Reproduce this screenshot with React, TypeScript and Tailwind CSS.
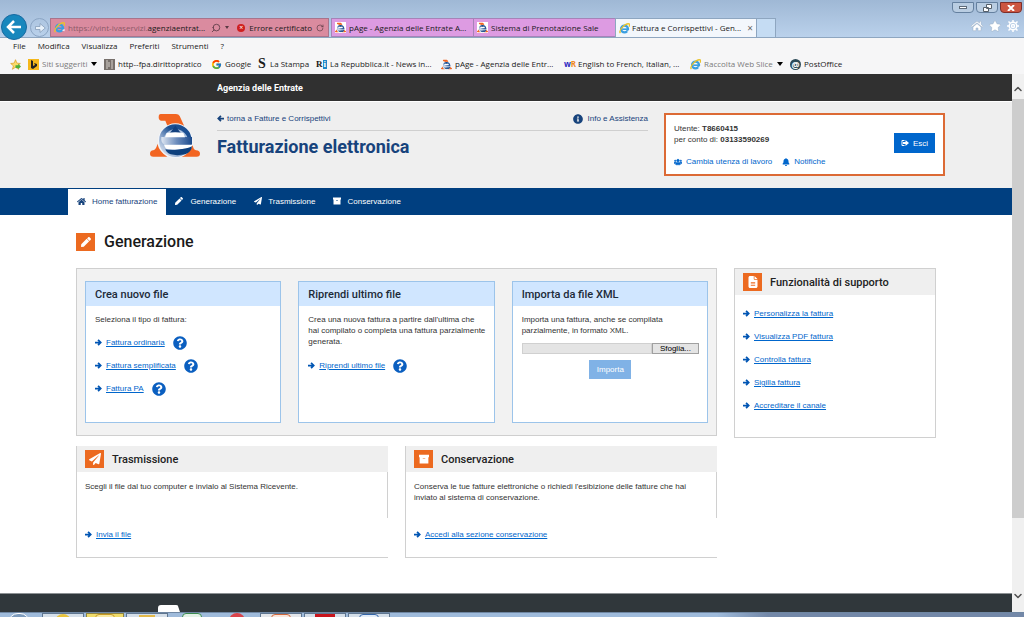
import type { ReactNode } from "react";
import { FaBell, FaHome, FaInfoCircle, FaPaperPlane, FaPen, FaQuestionCircle, FaStar, FaUsers } from "react-icons/fa";
import { FaFileLines } from "react-icons/fa6";
import { FcGoogle } from "react-icons/fc";
import { LuRotateCw, LuSearch, LuChevronUp, LuChevronDown } from "react-icons/lu";

const IeIcon = () => (
  <svg viewBox="0 0 24 24" className="size-[11px] shrink-0" fill="none">
    <circle cx="12" cy="13" r="7.5" stroke="#3a9fe0" strokeWidth="5" />
    <path d="M7 13.5h15" stroke="#3a9fe0" strokeWidth="3.5" />
    <path d="M17 18l6-3v5z" fill="#f7f8fa" />
    <path d="M3 22C-2 16 14 0 22 2c2 1 1 4 0 6" stroke="#e9c32c" strokeWidth="3" />
  </svg>
);

const AgenziaLogo = ({ className = "" }: { className?: string }) => (
  <svg viewBox="0 0 150 135" className={className}>
    <defs>
      <linearGradient id="band" x1="0" y1="0" x2="1" y2="0">
        <stop offset="0" stopColor="#dfe7f2" />
        <stop offset="0.5" stopColor="#6d8dbd" />
        <stop offset="1" stopColor="#1b4a8c" />
      </linearGradient>
      <linearGradient id="ring" x1="0" y1="1" x2="1" y2="0">
        <stop offset="0" stopColor="#f4f7fb" />
        <stop offset="0.35" stopColor="#8ba6cc" />
        <stop offset="0.6" stopColor="#1b4f92" />
      </linearGradient>
    </defs>
    <path d="M32 3H78Q86 3 89 9L103 40Q78 28 52 38L46 23H33Q26 22 26 13Q26 3 32 3Z" fill="#f26522" />
    <path d="M22 92Q28 116 52 131H10Q0 131 0 122Q0 113 10 112Q20 108 22 92Z" fill="#f26522" />
    <path d="M128 96Q130 110 138 112Q150 113 150 122Q150 131 140 131H92Q118 122 128 96Z" fill="#f26522" />
    <circle cx="76" cy="83" r="52" fill="#f2f5fa" />
    <circle cx="76" cy="83" r="49" fill="url(#ring)" />
    <path d="M40 80Q44 56 70 48H82Q108 56 114 78H40Z" fill="#a9bfdc" />
    <path d="M76 38L94 62H58Z" fill="#12407f" />
    <path d="M34 72H126V95H44Q32 90 34 72Z" fill="url(#band)" />
    <path d="M50 60Q76 56 100 60L105 73H45Z" fill="#fff" />
    <path d="M42 95H128L122 105Q84 112 50 108Q44 104 42 95Z" fill="#fff" />
    <path d="M46 109Q60 112 84 110Q110 108 126 100Q124 118 106 124Q80 129 62 124Q50 120 46 109Z" fill="#0d3f7c" />
  </svg>
);

const ArchiveIcon = ({ className = "" }: { className?: string }) => (
  <svg viewBox="0 0 16 16" className={className} fill="currentColor">
    <path d="M0 1h16v4H0zM1 5h14v10H1zM6 7v1h4V7z" fillRule="evenodd" />
  </svg>
);

const ArrowIcon = ({ className = "" }: { className?: string }) => (
  <svg viewBox="0 0 16 16" className={className} fill="none" stroke="currentColor" strokeWidth="4">
    <path d="M0 8h13M7 2l6 6-6 6" />
  </svg>
);

const SignOutIcon = () => (
  <svg viewBox="0 0 16 16" className="size-2" fill="currentColor">
    <path d="M7 2H3a2 2 0 0 0-2 2v8a2 2 0 0 0 2 2h4v-2H3V4h4z" />
    <path d="M9 2l7 6-7 6v-4H4V6h5z" />
  </svg>
);

const tabs = [
  { label: "pAge - Agenzia delle Entrate A...", active: false },
  { label: "Sistema di Prenotazione Sale", active: false },
  { label: "Fattura e Corrispettivi - Gen...", active: true },
];

const menus = ["File", "Modifica", "Visualizza", "Preferiti", "Strumenti", "?"];

const bookmarks: { label: string; width: string; icon: ReactNode; muted?: boolean }[] = [
  {
    label: "Siti suggeriti",
    width: "w-[76px]",
    muted: true,
    icon: (
      <svg viewBox="0 0 11 11" className="size-[11px]">
        <path d="M0 0h11v11H0z" fill="#f5b81c" />
        <path d="M3 1l2 1v5l2-1-1-2 3 1v2L5 10 3 9z" fill="#222" />
      </svg>
    ),
  },
  {
    label: "http--fpa.dirittopratico",
    width: "w-[107px]",
    icon: (
      <svg viewBox="0 0 11 11" className="size-[11px]">
        <path d="M0 0h11v11H0z" fill="#77706c" />
        <path d="M3 1v9M8 1v9M5 3v5" stroke="#d8d2cc" />
      </svg>
    ),
  },
  { label: "Google", width: "w-[47px]", icon: <FcGoogle className="size-[11px]" /> },
  {
    label: "La Stampa",
    width: "w-[58px]",
    icon: <span className="w-[9px] font-['Liberation_Serif',serif] text-sm leading-none font-black">S</span>,
  },
  {
    label: "La Repubblica.it - News in...",
    width: "w-[125px]",
    icon: (
      <span className="flex w-[11px] font-['Liberation_Serif',serif] text-[9px] leading-none font-bold">
        R<span className="bg-[#1b87c9] px-px text-white">i</span>
      </span>
    ),
  },
  { label: "pAge - Agenzia delle Entr...", width: "w-[123px]", icon: <AgenziaLogo className="size-[11px]" /> },
  {
    label: "English to French, Italian, ...",
    width: "w-[126px]",
    icon: (
      <span className="w-[11px] font-bold text-[#2a1fc0]">
        w<span className="text-[#f08a1d]">R</span>
      </span>
    ),
  },
  { label: "Raccolta Web Slice", width: "w-[100px]", muted: true, icon: <IeIcon /> },
  {
    label: "PostOffice",
    width: "w-[60px]",
    icon: (
      <span className="flex size-[11px] items-center justify-center rounded-full bg-[#2c4a58] text-[9px] leading-none font-bold text-white">
        @
      </span>
    ),
  },
];

const Browser = () => (
  <div className="font-['Open_Sans',sans-serif] text-[8px] text-[#1a1a1a]">
    <div className="bg-gradient-to-b from-[#9fb8d5] to-[#bbd2ec]">
      <div className="flex h-[14px] items-start justify-end gap-[2px] pt-[2px] pr-[2px]">
        <button aria-label="Riduci" className="flex h-[11px] w-[22px] items-center justify-center rounded-b-sm border border-[#64809f] bg-[#b9cde2]">
          <span className="h-[3px] w-2 border border-[#5d6b7a] bg-white" />
        </button>
        <button aria-label="Ripristina" className="flex h-[11px] w-[22px] items-center justify-center rounded-b-sm border border-[#64809f] bg-[#b9cde2]">
          <svg viewBox="0 0 9 8" className="h-2 w-[9px]" fill="#fff" stroke="#56606b">
            <path d="M3.5.5h5v4h-5zM.5 3.5h5v4h-5z" />
          </svg>
        </button>
        <button aria-label="Chiudi" className="flex h-[11px] w-[22px] items-center justify-center rounded-b-sm border border-[#7d2f2b] bg-[#cc5540]">
          <svg viewBox="0 0 8 6" className="h-[6px] w-2" stroke="#fff" strokeWidth="2">
            <path d="M1 0l6 6M7 0L1 6" />
          </svg>
        </button>
      </div>
      <div className="flex h-6 items-end border-b border-[#8ea6c0]">
        <button aria-label="Indietro" className="z-10 -mb-[3px] ml-px flex size-[26px] shrink-0 items-center justify-center rounded-full border border-[#1769a0] bg-[#1887bd] text-white">
          <svg viewBox="0 0 16 16" className="size-4" fill="none" stroke="currentColor" strokeWidth="2.5">
            <path d="M15 8H3M8 2L2 8l6 6" />
          </svg>
        </button>
        <button aria-label="Avanti" className="ml-[3px] flex size-[19px] shrink-0 items-center justify-center rounded-full border border-[#8ba5c4]">
          <svg viewBox="0 0 16 16" className="size-3" fill="#e8f1fa" stroke="#8199b5">
            <path d="M2 6h6V2l7 6-7 6v-4H2z" />
          </svg>
        </button>
        <div className="ml-px flex h-[19px] w-[279px] shrink-0 items-center border border-[#a8748c] bg-[#da8b9f] pr-1 pl-[3px]">
          <IeIcon />
          <span className="ml-[3px] whitespace-nowrap text-[#8c5a68]">
            https://vint-ivaservizi.<span className="text-[#1a1a1a]">agenziaentrat...</span>
          </span>
          <LuSearch className="ml-auto size-[10px] shrink-0 -scale-x-100 text-[#5a3a44]" />
          <span className="ml-1 border-x-2 border-t-3 border-x-transparent border-t-[#5a3a44]" />
          <span className="ml-2 flex size-2 shrink-0 items-center justify-center rounded-full bg-[#cf1f1f] text-[7px] leading-none text-white">×</span>
          <span className="mx-1 whitespace-nowrap">Errore certificato</span>
          <LuRotateCw className="size-2 shrink-0 text-[#5a3a44]" />
        </div>
        <div className="ml-[2px] flex">
          {tabs.map((tab) => (
            <div
              key={tab.label}
              className={
                tab.active
                  ? "flex h-[19px] w-[142px] items-center gap-[2px] border border-b-0 border-[#8ea6c0] bg-[#f3f7fc] px-[3px]"
                  : "flex h-[19px] w-[142px] items-center gap-[3px] border border-r-0 border-[#a683b8] bg-[#dd9be2] px-[3px]"
              }
            >
              {tab.active ? <IeIcon /> : <AgenziaLogo className="size-[11px] shrink-0 bg-white" />}
              <span className="whitespace-nowrap">{tab.label}</span>
              {tab.active && (
                <button aria-label="Chiudi scheda" className="ml-auto text-[10px] leading-none text-[#666]">
                  ×
                </button>
              )}
            </div>
          ))}
          <button aria-label="Nuova scheda" className="h-[19px] w-[19px] border border-b-0 border-l-0 border-[#8ea6c0] bg-[#c5dcf3]" />
        </div>
        <div className="mr-[5px] mb-[5px] ml-auto flex gap-[6px] text-white">
          <FaHome className="size-3 stroke-[#8aa0b8] stroke-20" />
          <FaStar className="size-3 stroke-[#8aa0b8] stroke-20" />
          <svg viewBox="0 0 16 16" className="size-3" fill="none" stroke="#fff" strokeWidth="2">
            <circle cx="8" cy="8" r="5" />
            <circle cx="8" cy="8" r="2" />
            <path d="M8 0v3M8 13v3M0 8h3M13 8h3M2 2l2 2M12 12l2 2M2 14l2-2M12 4l2-2" />
          </svg>
        </div>
      </div>
    </div>
    <div className="bg-[#f6f6f7]">
      <nav className="flex h-4 items-center gap-3 pl-[13px]">
        {menus.map((menu) => (
          <button key={menu}>{menu}</button>
        ))}
      </nav>
      <div className="flex h-5 items-center pl-[10px]">
        <svg viewBox="0 0 16 16" className="mr-[7px] size-[11px] shrink-0">
          <path d="M8 1l2 5 5 .5-4 3.5 1.5 5L8 12l-4.500 3L5 10 1 6.500 6 6z" fill="#fbdc6a" stroke="#d99a1c" />
          <path d="M8 9h4V7l4 4-4 4v-2H8z" fill="#4caf3a" />
        </svg>
        {bookmarks.map((item) => (
          <a key={item.label} href="#" className={`flex shrink-0 items-center gap-[3px] whitespace-nowrap ${item.width}`}>
            {item.icon}
            <span className={item.muted ? "text-[#7a7a7a]" : ""}>{item.label}</span>
            {item.muted && <span className="ml-px border-x-3 border-t-4 border-x-transparent border-t-black" />}
          </a>
        ))}
      </div>
    </div>
  </div>
);

const ArrowLink = ({ children, help = false }: { children: ReactNode; help?: boolean }) => (
  <li className="flex h-[15px] items-center">
    <a href="#" className="flex items-center gap-1 text-[#0066cc]">
      <ArrowIcon className="size-[7px] text-[#0055b3]" />
      <span className="underline">{children}</span>
    </a>
    {help && (
      <button aria-label="Aiuto" className="ml-2 text-[#0b5fc0]">
        <FaQuestionCircle className="size-[14px]" />
      </button>
    )}
  </li>
);

const OrangeBox = ({ children }: { children: ReactNode }) => (
  <span className="flex h-[18px] w-[19px] shrink-0 items-center justify-center bg-[#ec6a20] text-white">{children}</span>
);

const Card = ({ title, children }: { title: string; children: ReactNode }) => (
  <section className="h-[142px] border border-[#9cc4ea] bg-white">
    <h3 className="flex h-6 items-center bg-[#d0e6ff] px-[9px] font-[Roboto,sans-serif] text-[11px] font-medium text-[#1c2a38]">{title}</h3>
    <div className="pt-2 pr-2 pl-[9px]">{children}</div>
  </section>
);

const PanelTitle = ({ icon, children }: { icon: ReactNode; children: ReactNode }) => (
  <h3 className="flex h-[26px] items-center gap-2 bg-[#efefef] pl-2 font-[Roboto,sans-serif] text-[11px] font-medium text-[#222]">
    <OrangeBox>{icon}</OrangeBox>
    {children}
  </h3>
);

const Panel = ({ title, icon, text, link }: { title: string; icon: ReactNode; text: string; link: string }) => (
  <section className="border-b border-l border-[#d0d0d0] bg-white">
    <PanelTitle icon={icon}>{title}</PanelTitle>
    <p className="h-[46px] border-r border-[#d0d0d0] px-2 pt-[9px]">{text}</p>
    <ul className="px-2 pt-[9px] pb-[15px]">
      <ArrowLink>{link}</ArrowLink>
    </ul>
  </section>
);

const Header = () => (
  <header>
    <div className="h-[28px] border-b border-white bg-[#303030]">
      <div className="mx-auto flex h-full max-w-[878px] items-center pt-[2px] pl-[150px] font-[Roboto,sans-serif] text-[9px] font-bold text-white">
        Agenzia delle Entrate
      </div>
    </div>
    <div className="bg-[#efefef]">
      <div className="mx-auto flex h-[86px] max-w-[878px] items-start pt-[11px] pl-[83px]">
        <AgenziaLogo className="h-[45px] w-[50px] shrink-0" />
        <div className="ml-[17px] flex-1">
          <div className="flex h-[18px] items-start justify-between border-b border-[#cfcfcf] text-[#17437c]">
            <a href="#" className="flex items-center gap-[3px]">
              <ArrowIcon className="size-[7px] rotate-180" />
              torna a Fatture e Corrispettivi
            </a>
            <a href="#" className="flex items-center gap-[5px]">
              <FaInfoCircle className="size-[10px]" />
              Info e Assistenza
            </a>
          </div>
          <h1 className="mt-1 font-[Roboto,sans-serif] text-lg leading-6 font-bold text-[#17437c]">Fatturazione elettronica</h1>
        </div>
        <div className="ml-4 flex h-[63px] w-[281px] items-start justify-between border-2 border-[#dc6a35] bg-white px-2">
          <div className="pt-2">
            <p>
              Utente: <b>T8660415</b>
            </p>
            <p>
              per conto di: <b>03133590269</b>
            </p>
            <div className="mt-[11px] flex gap-[10px] text-[#0066cc]">
              <a href="#" className="flex items-center gap-1">
                <FaUsers className="size-2 stroke-current stroke-40" />
                Cambia utenza di lavoro
              </a>
              <a href="#" className="flex items-center gap-1">
                <FaBell className="size-2" />
                Notifiche
              </a>
            </div>
          </div>
          <button className="mt-[18px] flex h-5 w-[41px] items-center justify-center gap-1 bg-[#0066cc] text-white">
            <SignOutIcon />
            Esci
          </button>
        </div>
      </div>
    </div>
    <nav className="bg-[#003f80]">
      <div className="mx-auto flex h-[27px] max-w-[878px] items-end pl-px text-white">
        <a href="#" className="flex h-[26px] items-center gap-[6px] bg-white px-[9px] pb-[2px] text-[#17437c]">
          <FaHome className="size-[9px]" />
          Home fatturazione
        </a>
        <a href="#" className="flex h-[26px] items-center gap-[7px] px-[9px] pb-[2px]">
          <FaPen className="size-2" />
          Generazione
        </a>
        <a href="#" className="flex h-[26px] items-center gap-[6px] px-[9px] pb-[2px]">
          <FaPaperPlane className="size-2" />
          Trasmissione
        </a>
        <a href="#" className="flex h-[26px] items-center gap-[6px] px-[9px] pb-[2px]">
          <ArchiveIcon className="size-2" />
          Conservazione
        </a>
      </div>
    </nav>
  </header>
);

const Generazione = () => (
  <div className="grid grid-cols-3 gap-[17px] border border-[#cfcfcf] bg-[#f2f2f2] px-2 py-3">
    <Card title="Crea nuovo file">
      <p>Seleziona il tipo di fattura:</p>
      <ul className="mt-[10px] flex flex-col gap-2">
        <ArrowLink help>Fattura ordinaria</ArrowLink>
        <ArrowLink help>Fattura semplificata</ArrowLink>
        <ArrowLink help>Fattura PA</ArrowLink>
      </ul>
    </Card>
    <Card title="Riprendi ultimo file">
      <p>Crea una nuova fattura a partire dall'ultima che hai compilato o completa una fattura parzialmente generata.</p>
      <ul className="mt-[11px]">
        <ArrowLink help>Riprendi ultimo file</ArrowLink>
      </ul>
    </Card>
    <Card title="Importa da file XML">
      <p>Importa una fattura, anche se compilata parzialmente, in formato XML.</p>
      <div className="mt-[7px] flex h-[11px]">
        <input aria-label="File da importare" readOnly className="min-w-0 flex-1 border border-[#d0d0d0] bg-[#e4e4e4]" />
        <button className="flex w-[47px] items-center justify-center border border-[#a0a0a0] bg-[#e4e4e4] leading-none text-black">Sfoglia...</button>
      </div>
      <button className="mx-auto mt-[6px] block h-[19px] w-[42px] bg-[#80b2e6] text-white">Importa</button>
    </Card>
  </div>
);

const Scrollbar = () => (
  <div className="flex w-3 shrink-0 flex-col items-center bg-[#f0f0f0] text-[#505050]">
    <div className="flex h-[25px] items-end pb-1">
      <LuChevronUp className="size-3" strokeWidth={3} />
    </div>
    <div className="w-full flex-[5] bg-[#cdcdcd]" />
    <div className="flex flex-1 items-end pb-[10px]">
      <LuChevronDown className="size-3" strokeWidth={3} />
    </div>
  </div>
);

// only the top edge of the task bar is visible
const Taskbar = () => (
  <div className="flex h-[5px] items-start overflow-hidden border-t border-[#6f87a3] bg-gradient-to-r from-[#9fbbdb] from-70% to-[#7388a8] to-75%">
    <div className="ml-2 h-5 w-[22px] rounded-full border border-white bg-[#7e9cbd]" />
    <div className="ml-3 flex gap-[2px]">
      <div className="flex h-5 w-[42px] justify-center border border-[#5f7690] bg-[#d5dfe9]"><i className="h-5 w-4 rounded-full bg-[#e8c33c]" /></div>
      <div className="flex h-5 w-[38px] justify-center border border-[#8d8240] bg-[#f0dc6a]"><i className="h-5 w-5 rounded-t-sm border border-[#c99b25] bg-[#f7e9a0]" /></div>
      <div className="flex h-5 w-[42px] justify-center border border-[#5f7690] bg-[#d5dfe9]"><i className="mt-px h-5 w-4 bg-[#e3b94a]" /></div>
      <div className="flex h-5 w-[44px] justify-center"><i className="h-5 w-5 rounded-t-sm border border-[#3c8c50] bg-[#e4f2e7]" /></div>
      <div className="flex h-5 w-[42px] justify-center"><i className="size-4 rounded-full bg-[#d9434a]" /></div>
      <div className="flex h-5 w-[42px] justify-center border border-[#5f7690] bg-[#e3e6ea]"><i className="h-5 w-5 rounded-t-sm border border-[#d2683c] bg-[#fae6dc]" /></div>
      <div className="flex h-5 w-[42px] justify-center border border-[#5f7690] bg-[#d5dfe9]"><i className="h-5 w-5 bg-[#c8141c]" /></div>
      <div className="flex h-5 w-[42px] justify-center border border-[#5f7690] bg-[#d5dfe9]"><i className="h-5 w-5 rounded-t-sm border border-[#3465a8] bg-[#e2ecf8]" /></div>
    </div>
  </div>
);

export default function App() {
  return (
    <div className="flex min-h-screen flex-col bg-white">
      <Browser />
      <div className="flex flex-1">
        <div className="flex min-w-0 flex-1 flex-col font-['Liberation_Sans',Arial,sans-serif] text-[8px] leading-[11px] text-[#333]">
          <Header />
          <main className="mx-auto w-full max-w-[878px] flex-1 px-[9px] pt-[15px] pb-[35px]">
            <h2 className="flex h-6 items-center gap-[9px] font-[Roboto,sans-serif] text-base font-medium text-[#1a1a1a]">
              <OrangeBox>
                <FaPen className="size-[10px]" />
              </OrangeBox>
              Generazione
            </h2>
            <div className="mt-[14px] flex items-start gap-[17px]">
              <div className="min-w-0 flex-1">
                <Generazione />
                <div className="mt-[10px] grid grid-cols-2 gap-[17px]">
                  <Panel
                    title="Trasmissione"
                    icon={<FaPaperPlane className="size-3" />}
                    text="Scegli il file dal tuo computer e invialo al Sistema Ricevente."
                    link="Invia il file"
                  />
                  <Panel
                    title="Conservazione"
                    icon={<ArchiveIcon className="size-[10px]" />}
                    text="Conserva le tue fatture elettroniche o richiedi l'esibizione delle fatture che hai inviato al sistema di conservazione."
                    link="Accedi alla sezione conservazione"
                  />
                </div>
              </div>
              <aside className="w-[202px] border border-[#d0d0d0] bg-white">
                <PanelTitle icon={<FaFileLines className="size-3" />}>Funzionalità di supporto</PanelTitle>
                <ul className="flex flex-col gap-2 px-2 pt-[11px] pb-6">
                  <ArrowLink>Personalizza la fattura</ArrowLink>
                  <ArrowLink>Visualizza PDF fattura</ArrowLink>
                  <ArrowLink>Controlla fattura</ArrowLink>
                  <ArrowLink>Sigilla fattura</ArrowLink>
                  <ArrowLink>Accreditare il canale</ArrowLink>
                </ul>
              </aside>
            </div>
          </main>
          <footer className="border-t border-[#8d9194] bg-[#30373b]">
            <div className="mx-auto flex h-[18px] max-w-[878px] items-end pl-[91px]">
              <svg viewBox="0 0 22 7" className="h-[7px] w-[22px]" fill="#fff">
                <path d="M3 0h15q2 0 2 1l2 6H0V3q0-3 3-3z" />
              </svg>
            </div>
          </footer>
        </div>
        <Scrollbar />
      </div>
      <Taskbar />
    </div>
  );
}
